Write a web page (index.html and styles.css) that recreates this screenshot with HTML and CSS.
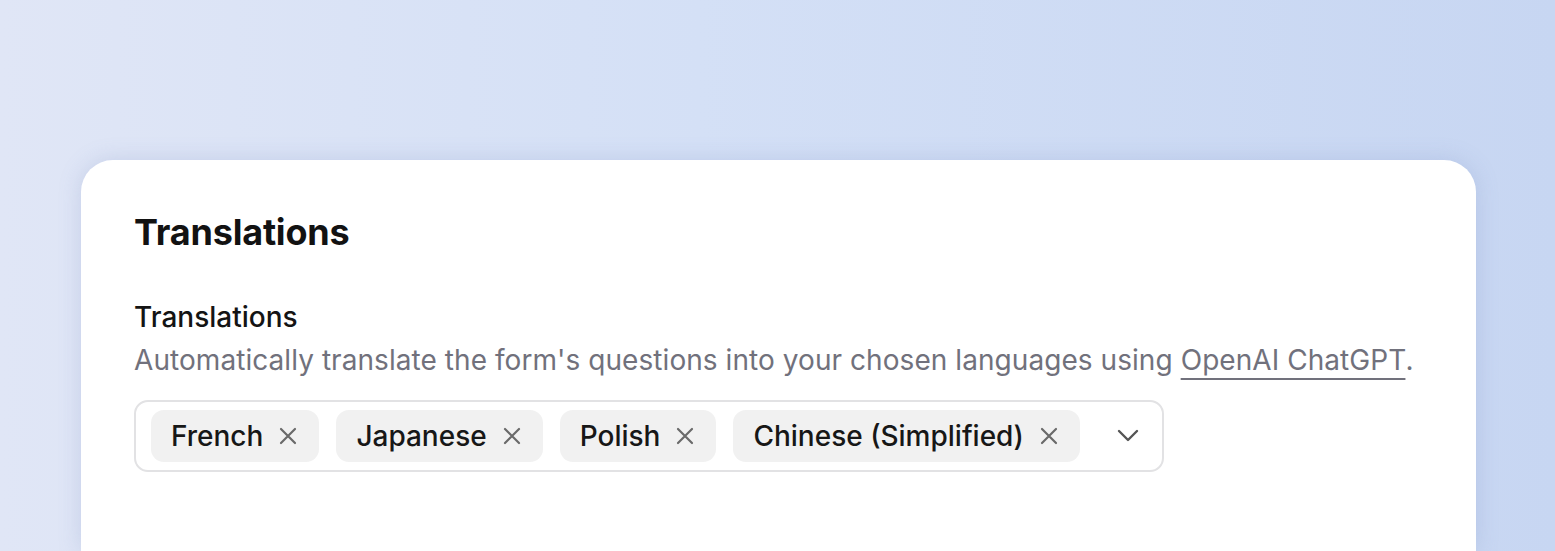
FILE: index.html
```html
<!DOCTYPE html>
<html>
<head>
<meta charset="utf-8">
<link rel="stylesheet" href="styles.css">
</head>
<body>
<div class="page">
  <section class="card">
    <h2 class="title">Translations</h2>
    <div class="field">
      <div class="label">Translations</div>
      <p class="desc">Automatically translate the form's questions into your chosen languages using <a class="link" href="#">OpenAI ChatGPT</a>.</p>
      <div class="select">
        <div class="chips">
          <span class="chip">French<svg class="x" viewBox="0 0 20 20"><path d="M3 3L17 17M17 3L3 17"/></svg></span>
          <span class="chip">Japanese<svg class="x" viewBox="0 0 20 20"><path d="M3 3L17 17M17 3L3 17"/></svg></span>
          <span class="chip">Polish<svg class="x" viewBox="0 0 20 20"><path d="M3 3L17 17M17 3L3 17"/></svg></span>
          <span class="chip">Chinese (Simplified)<svg class="x" viewBox="0 0 20 20"><path d="M3 3L17 17M17 3L3 17"/></svg></span>
        </div>
        <svg class="chev" viewBox="0 0 24 24"><path d="M3 7L12 16L21 7"/></svg>
      </div>
    </div>
  </section>
</div>
</body>
</html>
```
FILE: styles.css
```css
html, body {
  margin: 0;
  padding: 0;
}
body {
  width: 1555px;
  height: 551px;
  overflow: hidden;
  background: linear-gradient(90deg, #e0e6f6 0%, #d4e0f6 45%, #c7d6f2 100%);
  font-family: Inter, "Noto Sans", sans-serif;
}
.page {
  padding: 160px 0 0 81px;
}
.card {
  width: 1395px;
  height: 391px;
  box-sizing: border-box;
  background: #fff;
  border-radius: 32px 32px 0 0;
  box-shadow: 0 0 22px rgba(120, 140, 190, 0.25);
  padding: 50px 53px 0 53px;
}
.title {
  margin: 0;
  font-size: 36px;
  font-weight: 700;
  color: #121212;
  line-height: 44px;
  letter-spacing: -0.2px;
}
.field {
  margin-top: 46px;
}
.label {
  font-size: 28px;
  font-weight: 500;
  color: #141414;
  line-height: 34px;
}
.desc {
  margin: 8px 0 0;
  font-size: 28px;
  color: #71717c;
  line-height: 36px;
  letter-spacing: 0.06px;
}
.link {
  color: #71717c;
  text-decoration: underline;
  text-decoration-thickness: 2px;
  text-underline-offset: 8px;
}
.select {
  margin-top: 22px;
  width: 1030px;
  height: 72px;
  box-sizing: border-box;
  border: 2px solid #e2e2e4;
  border-radius: 14px;
  display: flex;
  align-items: center;
  padding: 0 16px 0 15px;
}
.chips {
  display: flex;
  gap: 17px;
  flex: 1;
}
.chip {
  display: inline-flex;
  align-items: center;
  height: 52px;
  padding: 0 21px 0 20px;
  background: #f1f1f1;
  border-radius: 13px;
  font-size: 28px;
  font-weight: 500;
  color: #171717;
  gap: 15px;
}
.x {
  width: 20px;
  height: 20px;
  fill: none;
  stroke: #6a6a6a;
  stroke-width: 2.2;
  stroke-linecap: round;
}
.chev {
  width: 24px;
  height: 24px;
  fill: none;
  stroke: #555;
  stroke-width: 2.4;
  stroke-linecap: round;
  stroke-linejoin: round;
  margin-right: 6px;
}
```
